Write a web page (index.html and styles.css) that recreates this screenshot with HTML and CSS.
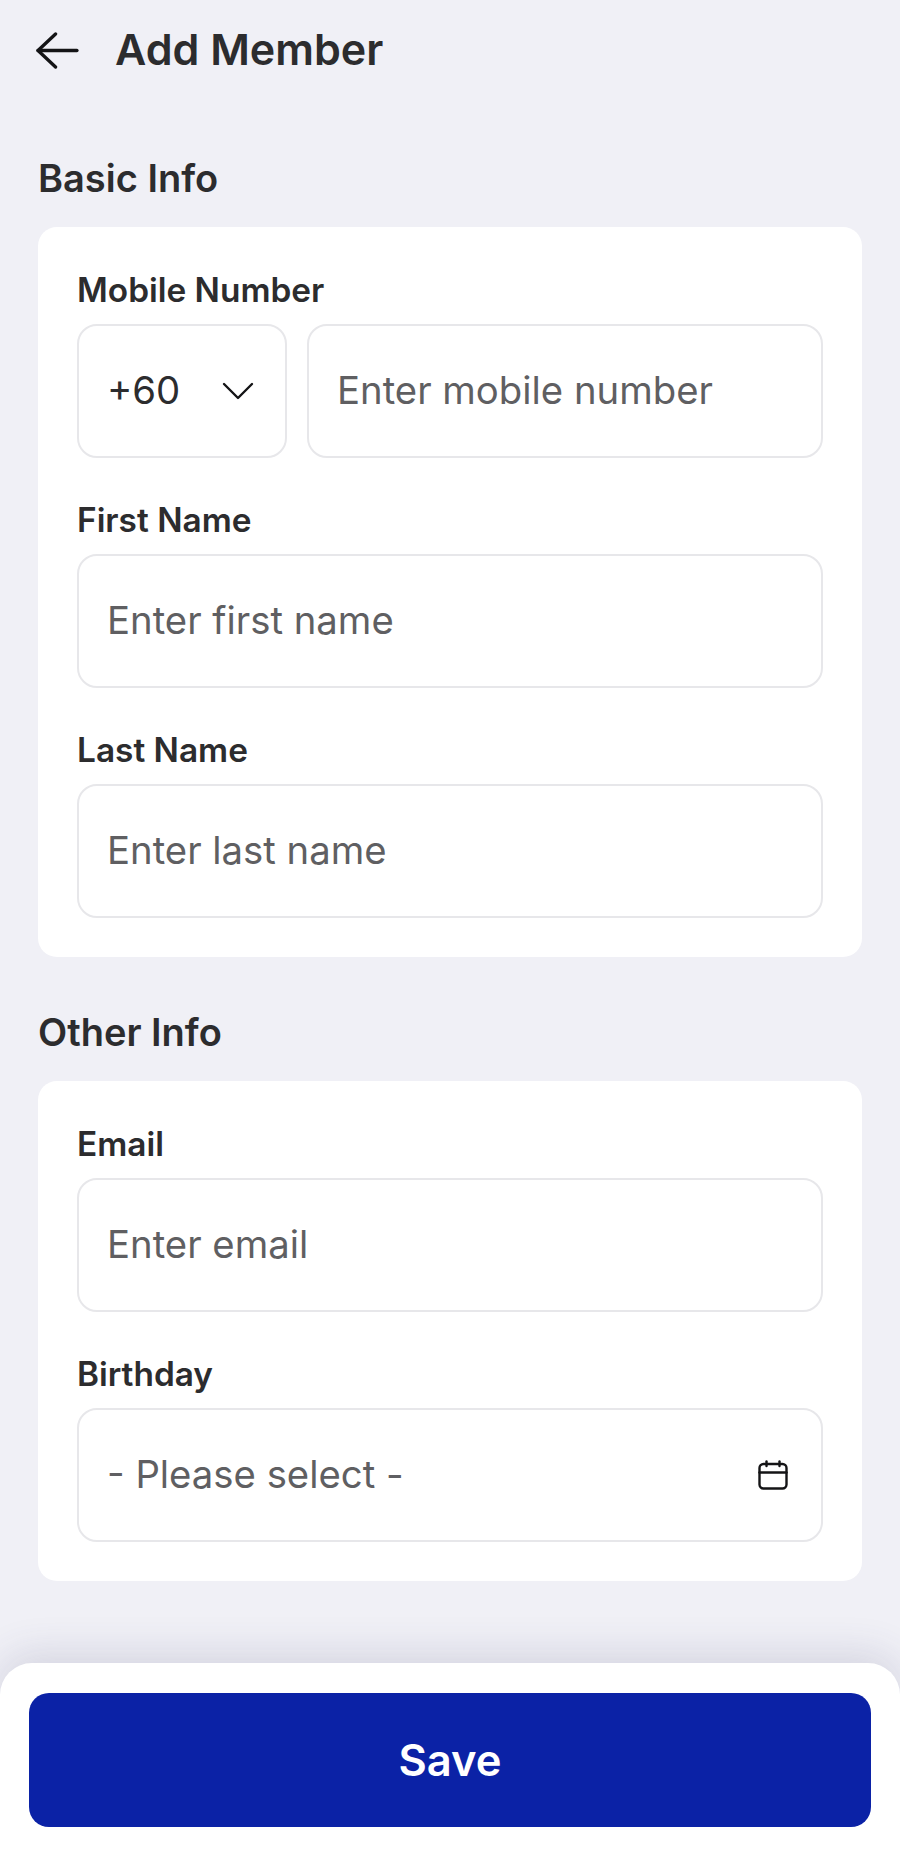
FILE: index.html
```html
<!DOCTYPE html>
<html lang="en">
<head>
  <meta charset="UTF-8">
  <meta name="viewport" content="width=device-width, initial-scale=1.0">
  <title>Add Member</title>
  <link rel="stylesheet" href="styles.css">
</head>
<body>
  <div class="page">
    <header class="topbar">
      <svg class="back-icon" viewBox="0 0 44 38" fill="none" stroke="#141416" stroke-width="3.4" stroke-linecap="round" stroke-linejoin="round">
        <path d="M42 19H2"/>
        <path d="M20 2L2 19L20 36"/>
      </svg>
      <h1 class="page-title">Add Member</h1>
    </header>

    <main class="content">
      <h2 class="section-title">Basic Info</h2>
      <section class="card">
        <div class="field-group">
          <label class="field-label" for="mobile">Mobile Number</label>
          <div class="phone-row">
            <div class="country-select">
              <span>+60</span>
              <svg class="chevron-icon" viewBox="0 0 32 18" fill="none" stroke="#141416" stroke-width="2.4" stroke-linecap="round" stroke-linejoin="round">
                <path d="M2 2L16 16L30 2"/>
              </svg>
            </div>
            <input type="text" id="mobile" class="field-input" placeholder="Enter mobile number">
          </div>
        </div>
        <div class="field-group">
          <label class="field-label" for="firstName">First Name</label>
          <input type="text" id="firstName" class="field-input" placeholder="Enter first name">
        </div>
        <div class="field-group">
          <label class="field-label" for="lastName">Last Name</label>
          <input type="text" id="lastName" class="field-input" placeholder="Enter last name">
        </div>
      </section>

      <h2 class="section-title section-title-next">Other Info</h2>
      <section class="card">
        <div class="field-group">
          <label class="field-label" for="email">Email</label>
          <input type="text" id="email" class="field-input" placeholder="Enter email">
        </div>
        <div class="field-group">
          <label class="field-label" for="birthday">Birthday</label>
          <div class="input-wrapper">
            <input type="text" id="birthday" class="field-input" placeholder="- Please select -" readonly>
            <svg class="calendar-icon" viewBox="0 0 30 30" fill="none" stroke="#141416" stroke-width="2.4" stroke-linecap="round" stroke-linejoin="round">
              <rect x="1.5" y="4" width="27" height="24.5" rx="4"/>
              <path d="M1.5 12.5H28.5"/>
              <path d="M8.5 1.5V6"/>
              <path d="M21.5 1.5V6"/>
            </svg>
          </div>
        </div>
      </section>
    </main>

    <footer class="footer">
      <button class="save-btn">Save</button>
    </footer>
  </div>
</body>
</html>
```

FILE: styles.css
```css
html, body {
  margin: 0;
  padding: 0;
  height: 100%;
  font-family: Inter, 'Liberation Sans', sans-serif;
  background-color: #f0f0f6;
  color: #2c2c2e;
}
.page {
  display: flex;
  flex-direction: column;
  min-height: 100%;
  box-sizing: border-box;
}
.topbar {
  display: flex;
  align-items: center;
  height: 100px;
  padding-left: 36px;
  gap: 36px;
}
.back-icon {
  width: 43px;
  height: 37px;
  flex: none;
}
.page-title {
  margin: 0 0 2px;
  font-size: 43px;
  font-weight: 600;
  line-height: 50px;
}
.content {
  padding: 56px 38px 0;
}
.section-title {
  margin: 0 0 27px;
  font-size: 38px;
  font-weight: 600;
  line-height: 44px;
}
.section-title-next {
  margin-top: 53px;
  margin-bottom: 27px;
}
.card {
  display: flex;
  flex-direction: column;
  gap: 42px;
  background: white;
  border-radius: 19px;
  padding: 43px 39px 39px;
}
.field-group {
  display: flex;
  flex-direction: column;
  gap: 14px;
}
.field-label {
  font-size: 33.4px;
  font-weight: 600;
  line-height: 40px;
}
.phone-row {
  display: flex;
  gap: 20px;
}
.field-input {
  width: 100%;
  height: 134px;
  box-sizing: border-box;
  border: 2px solid #e7e7ea;
  border-radius: 20px;
  background: white;
  padding: 0 28px 2px;
  font-family: inherit;
  font-size: 38.3px;
  color: #2c2c2e;
  outline: none;
}
.field-input::placeholder {
  color: #5f5f62;
  opacity: 1;
}
.country-select {
  display: flex;
  align-items: center;
  justify-content: space-between;
  flex: none;
  width: 210px;
  height: 134px;
  box-sizing: border-box;
  border: 2px solid #e7e7ea;
  border-radius: 20px;
  padding: 0 31px 2px 28px;
  font-size: 38.3px;
}
.chevron-icon {
  width: 32px;
  height: 18px;
  margin-top: 2px;
}
.input-wrapper {
  position: relative;
}
.calendar-icon {
  position: absolute;
  right: 35px;
  top: 50%;
  width: 30px;
  height: 30px;
  transform: translateY(-50%);
}
.footer {
  margin-top: auto;
  background: white;
  border-radius: 32px 32px 0 0;
  padding: 30px 29px 37px;
  box-shadow: 0 -8px 40px rgba(60, 60, 110, 0.16);
}
.save-btn {
  display: block;
  width: 100%;
  height: 134px;
  border: none;
  border-radius: 20px;
  background-color: #0b22a6;
  color: white;
  font-family: inherit;
  font-size: 43.5px;
  font-weight: 600;
}
```
